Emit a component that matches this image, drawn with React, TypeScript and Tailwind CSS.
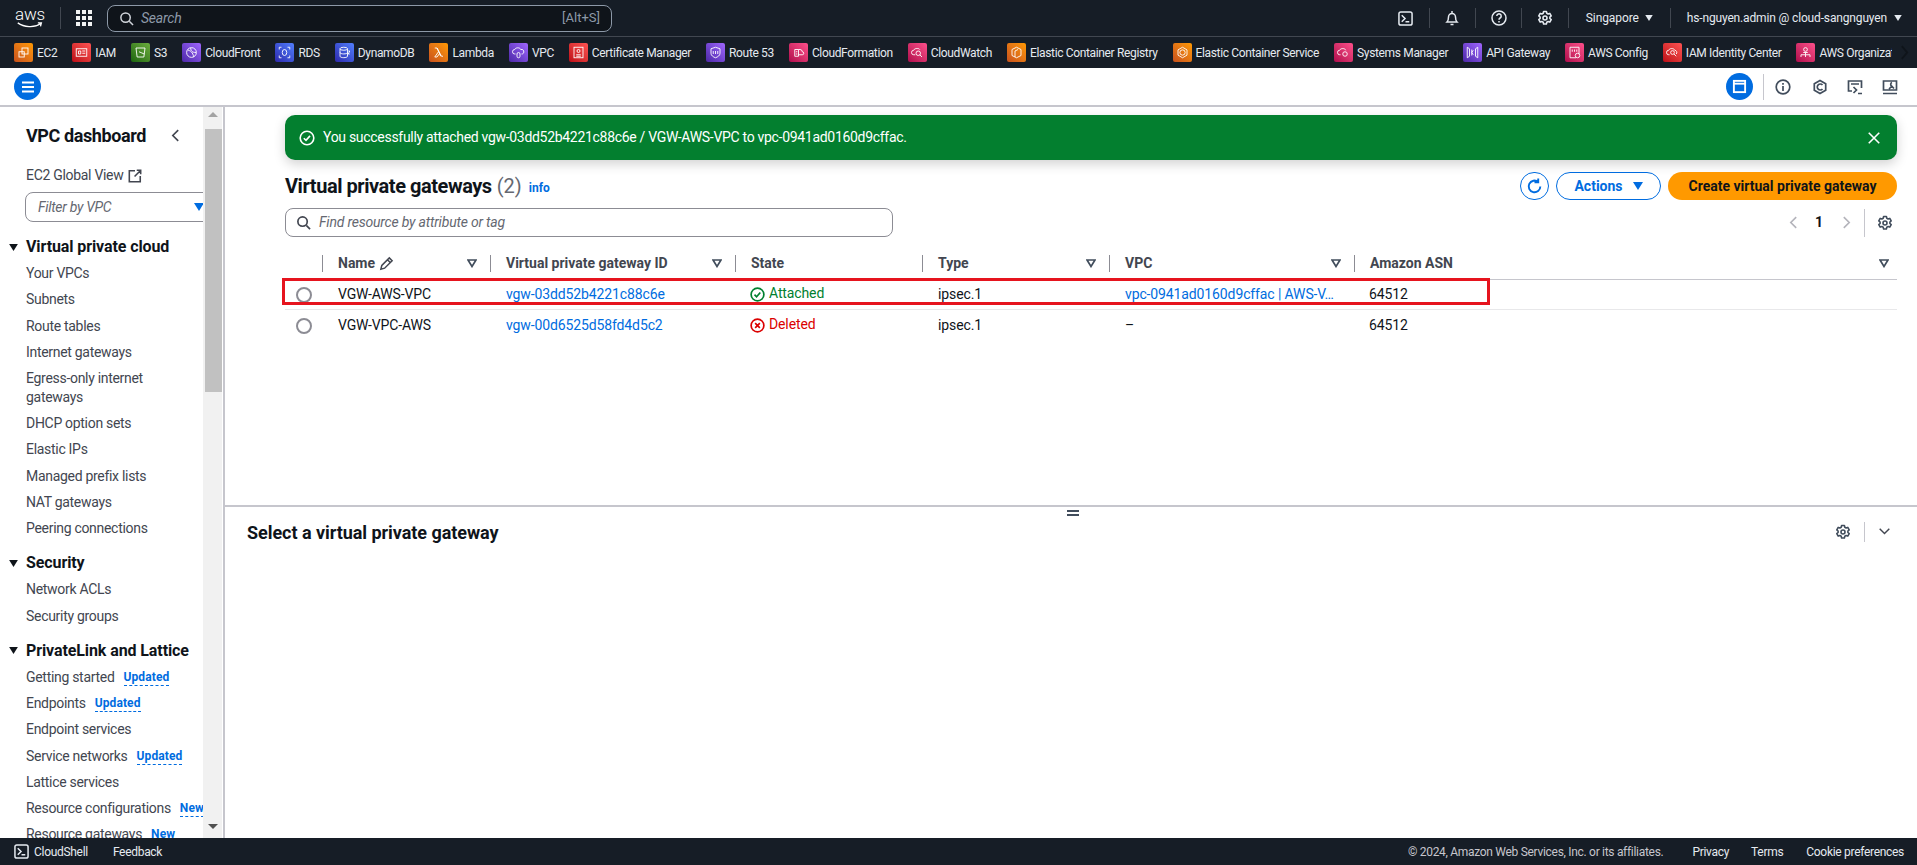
import { ReactNode } from "react";

const FONT = "font-['Roboto','Liberation_Sans',sans-serif]";

const grads: Record<string, string> = {
  orange: "from-[#c8511b] to-[#ff9900]",
  red: "from-[#bd0816] to-[#ff5252]",
  green: "from-[#1b660f] to-[#6cae3e]",
  purple: "from-[#4d27a8] to-[#a166ff]",
  blue: "from-[#2e27ad] to-[#527fff]",
  pink: "from-[#b0084d] to-[#ff4f8b]",
};

const services: { name: string; color: string; icon: ReactNode }[] = [
  { name: "EC2", color: "orange", icon: <><rect x="8" y="4" width="8" height="8" /><rect x="4" y="9" width="7" height="7" /></> },
  { name: "IAM", color: "red", icon: <><rect x="3" y="5" width="14" height="10" /><path d="M6 8h3v4H6zM11 8h4M11 11h4" /></> },
  { name: "S3", color: "green", icon: <><path d="M4 4h12l-1.5 12h-9zM8 9l7 3" /></> },
  { name: "CloudFront", color: "purple", icon: <><circle cx="10" cy="10" r="6.5" /><path d="M5 7c3 0 7 3 8 9M9 4c0 4 2 6 7 6" /></> },
  { name: "RDS", color: "blue", icon: <><ellipse cx="10" cy="10" rx="3" ry="4" /><path d="M3 6V3h3M14 3h3v3M3 14v3h3M14 17h3v-3" /></> },
  { name: "DynamoDB", color: "blue", icon: <><ellipse cx="9" cy="5" rx="5" ry="2" /><path d="M4 5v10c0 2.500 10 2.500 10 0V5M4 10c0 2.500 10 2.500 10 0M15 8l2 0-2 4h2" /></> },
  { name: "Lambda", color: "orange", icon: <path d="M5 4h3l6 11h2M8 4l5 11M10 9l-5 7h3l3-4" /> },
  { name: "VPC", color: "purple", icon: <><path d="M6 12H5a3 3 0 0 1 0-6c1-3 7-3 8 0a3 3 0 0 1 2 6h-1" /><rect x="8" y="10" width="4" height="7" rx="2" /></> },
  { name: "Certificate Manager", color: "red", icon: <><rect x="4" y="3" width="12" height="14" /><circle cx="10" cy="8" r="2" /><path d="M7 13h6M7 15h6" /></> },
  { name: "Route 53", color: "purple", icon: <><path d="M10 3l6 2v6c0 3-3 5-6 6-3-1-6-3-6-6V5z" /><path d="M7 8v4M10 8v4M13 8v4" /></> },
  { name: "CloudFormation", color: "pink", icon: <><path d="M5 15V6h5v9zM10 6h2a3 3 0 0 1 3 3 2 2 0 0 1 0 4h-5" /><path d="M6.500 9h2M6.500 12h2" /></> },
  { name: "CloudWatch", color: "pink", icon: <><path d="M7 13H5a3 3 0 0 1 0-6c1-3 7-3 8-1" /><circle cx="11" cy="11" r="3" /><path d="M13 13l3 3" /></> },
  { name: "Elastic Container Registry", color: "orange", icon: <><path d="M10 3l6 3v8l-6 3-6-3V6zM8 8v8M12 6l-4 2" /></> },
  { name: "Elastic Container Service", color: "orange", icon: <><path d="M10 3l6 3.500v7L10 17l-6-3.500v-7z" /><circle cx="10" cy="10" r="3.500" /></> },
  { name: "Systems Manager", color: "pink", icon: <><path d="M6 13H5a3 3 0 0 1 0-6c1-3 7-3 8 0" /><circle cx="12" cy="12" r="3" /></> },
  { name: "API Gateway", color: "purple", icon: <path d="M3 3l3 2v10l-3 2zM17 3l-3 2v10l3 2zM9 6v8M11 7l-2 3 2 3" /> },
  { name: "AWS Config", color: "pink", icon: <><path d="M4 3h12v9M4 3v14h8M7 6v3M10 6v3M13 6v3" /><circle cx="14" cy="14" r="3" /></> },
  { name: "IAM Identity Center", color: "red", icon: <><path d="M6 13H5a3 3 0 0 1 0-6c1-3 7-3 8 0a3 3 0 0 1 2 5" /><circle cx="10" cy="10" r="2.500" /><path d="M12 12l3 3" /></> },
  { name: "AWS Organizations", color: "pink", icon: <><circle cx="10" cy="6" r="2.500" /><path d="M7 10h6M10 10v3M4 16v-3h12v3M10 13v3" /></> },
];

function ServiceItem({ name, color, icon }: { name: string; color: string; icon: ReactNode }) {
  return (
    <div className="flex items-center shrink-0 gap-[4px]">
      <span className={`w-[19px] h-[19px] rounded-[2px] bg-linear-to-tr ${grads[color]} flex items-center justify-center`}>
        <svg viewBox="0 0 20 20" className="w-[15px] h-[15px]" fill="none" stroke="#fff" strokeWidth="1.2">{icon}</svg>
      </span>
      <span className="text-[12px] tracking-[-0.35px] text-[#e5eaf0] whitespace-nowrap">{name}</span>
    </div>
  );
}

function Divider({ className = "" }: { className?: string }) {
  return <span className={`w-px h-[20px] bg-[#414750] ${className}`} />;
}

function Gear({ className = "", color = "#414d5c" }: { className?: string; color?: string }) {
  return (
    <svg viewBox="0 0 16 16" className={className} fill="none" stroke={color} strokeWidth="1.6" strokeLinejoin="round">
      <path d="M6.600 1.500h2.800l.4 1.800 1.300.7 1.700-.6 1.400 2.400-1.300 1.200v1.500l1.300 1.200-1.400 2.400-1.700-.6-1.300.7-.4 1.800H6.600l-.4-1.800-1.300-.7-1.700.6-1.400-2.400 1.300-1.200V6.999L1.800 5.800l1.400-2.400 1.700.6 1.300-.7z" />
      <circle cx="8" cy="8" r="2" />
    </svg>
  );
}

function Terminal({ className = "" }: { className?: string }) {
  return (
    <svg viewBox="0 0 16 16" className={className} fill="none" stroke="#e5eaf0" strokeWidth="1.6">
      <rect x="1" y="1" width="14" height="14" rx="2" />
      <path d="M4 4.500L7.500 8 4 11.500M8 11.500h4" />
    </svg>
  );
}

function Caret({ className = "" }: { className?: string }) {
  return (
    <svg viewBox="0 0 10 8" className={className} fill="currentColor">
      <path d="M0 0h10L5 8z" />
    </svg>
  );
}

function SortIcon() {
  return (
    <svg viewBox="0 0 10 9" className="w-[10px] h-[9px] shrink-0" fill="none" stroke="#414d5c" strokeWidth="1.7">
      <path d="M1 1h8L5 7.500z" />
    </svg>
  );
}

function TopBar() {
  return (
    <div className="h-[36px] flex items-center bg-[#161d26] shrink-0">
      <div className="ml-[15px] w-[30px] flex flex-col items-center text-white leading-none">
        <span className="text-[17px] leading-[12px] tracking-[-0.2px] font-light">aws</span>
        <svg viewBox="0 0 30 8" className="w-[30px] h-[7px] mt-[2px]" fill="none" stroke="#fff" strokeWidth="1.5">
          <path d="M1 1c7 5 19 6 26 1M24 1l4 0-1 4" />
        </svg>
      </div>
      <Divider className="ml-[15px] h-[22px]" />
      <svg viewBox="0 0 16 16" className="w-[16px] h-[16px] ml-[15px]" fill="#f2f3f3">
        <path d="M0 0h4v4H0zM6 0h4v4H6zM12 0h4v4h-4zM0 6h4v4H0zM6 6h4v4H6zM12 6h4v4h-4zM0 12h4v4H0zM6 12h4v4H6zM12 12h4v4h-4z" />
      </svg>
      <div className="ml-[15px] w-[505px] h-[27px] flex items-center rounded-[8px] border border-[#8d99a8] bg-[#0f141a] px-[11px]">
        <svg viewBox="0 0 16 16" className="w-[15px] h-[15px]" fill="none" stroke="#d1d5db" strokeWidth="1.6">
          <circle cx="7" cy="7" r="5" />
          <path d="M11 11l4 4" />
        </svg>
        <span className="ml-[7px] text-[14px] italic tracking-[-0.2px] text-[#8d99a8]">Search</span>
        <span className="ml-auto text-[13px] text-[#8d99a8]">[Alt+S]</span>
      </div>
      <div className="ml-auto flex items-center text-[#e5eaf0]">
        <Terminal className="w-[15px] h-[15px]" />
        <Divider className="ml-[16px]" />
        <svg viewBox="0 0 16 16" className="w-[16px] h-[16px] ml-[14px]" fill="none" stroke="#e5eaf0" strokeWidth="1.5">
          <path d="M3 12c1.500-1.500 1.500-3 1.500-5a3.500 3.500 0 0 1 7 0c0 2 0 3.500 1.500 5zM6.500 14.500h3M8 1v2" />
        </svg>
        <Divider className="ml-[15px]" />
        <svg viewBox="0 0 16 16" className="w-[16px] h-[16px] ml-[15px]" fill="none" stroke="#e5eaf0" strokeWidth="1.5">
          <circle cx="8" cy="8" r="7" />
          <path d="M5.800 6a2.200 2.200 0 1 1 3.300 2c-.8.500-1.100.8-1.100 1.800M8 11v1.500" />
        </svg>
        <Divider className="ml-[14px]" />
        <Gear className="w-[16px] h-[16px] ml-[15px]" color="#e5eaf0" />
        <Divider className="ml-[15px]" />
        <span className="ml-[17px] text-[12px] tracking-[-0.1px]">Singapore</span>
        <Caret className="w-[8px] h-[6px] ml-[6px]" />
        <Divider className="ml-[17px]" />
        <span className="ml-[16px] text-[12px] tracking-[-0.15px]">hs-nguyen.admin @ cloud-sangnguyen</span>
        <Caret className="w-[8px] h-[6px] ml-[7px] mr-[15px]" />
      </div>
    </div>
  );
}

function ServicesBar() {
  return (
    <div className="h-[32px] flex items-center bg-[#161d26] border-t border-[#414750] shrink-0">
      <div className="flex items-center gap-[15px] pl-[14px] w-[1892px] overflow-hidden">
        {services.map((s) => (
          <ServiceItem key={s.name} {...s} />
        ))}
      </div>
      <svg viewBox="0 0 10 16" className="w-[9px] h-[15px] ml-[8px]" fill="none" stroke="#0f141a" strokeWidth="2">
        <path d="M2 1l6 7-6 7" />
      </svg>
    </div>
  );
}

function ToolIcon({ children }: { children: ReactNode }) {
  return (
    <svg viewBox="0 0 16 16" className="w-[16px] h-[16px]" fill="none" stroke="#414d5c" strokeWidth="1.7">
      {children}
    </svg>
  );
}

function HeaderBar() {
  return (
    <div className="h-[39px] flex items-center border-b-2 border-[#c6c6cd] bg-white shrink-0">
      <span className="ml-[14px] w-[27px] h-[27px] rounded-full bg-[#006ce0] flex items-center justify-center">
        <svg viewBox="0 0 16 16" className="w-[16px] h-[16px]" stroke="#fff" strokeWidth="1.800">
          <path d="M2 3.500h12M2 8h12M2 12.500h12" />
        </svg>
      </span>
      <div className="ml-auto mr-[19px] flex items-center">
        <span className="w-[27px] h-[27px] rounded-full bg-[#006ce0] flex items-center justify-center">
          <svg viewBox="0 0 16 16" className="w-[15px] h-[15px]" fill="none" stroke="#fff" strokeWidth="2">
            <rect x="2" y="2" width="12" height="12" />
            <path d="M2 5h12" />
          </svg>
        </span>
        <span className="w-px h-[26px] bg-[#c6c6cd] ml-[10px]" />
        <span className="ml-[11px]">
          <ToolIcon><circle cx="8" cy="8" r="6.800" /><path d="M8 7v5M8 4v1.800" /></ToolIcon>
        </span>
        <span className="ml-[21px]">
          <ToolIcon><path d="M8 1.500l5.700 3.200v6.600L8 14.500l-5.700-3.200V4.700z" /><path d="M10.500 6A3 3 0 1 0 10.500 10" /></ToolIcon>
        </span>
        <span className="ml-[19px]">
          <ToolIcon><path d="M5 12H1.500V2h13v7M4 5h8" /><path d="M6.500 8l3 3-3 3M11 14.500h4" /></ToolIcon>
        </span>
        <span className="ml-[19px]">
          <ToolIcon><path d="M1.500 11V2h13v9zM1 14.500h14M7 10l3-3M10 3.500a2 2 0 0 0-.5 3.500l2.500 2.500" /></ToolIcon>
        </span>
      </div>
    </div>
  );
}

function NavLink({ label, badge }: { label: string; badge?: string }) {
  return (
    <div className="pl-[26px] text-[14px] leading-[19px] tracking-[-0.3px] text-[#424650] whitespace-nowrap flex items-center">
      <span>{label}</span>
      {badge && (
        <span className="ml-[9px] text-[12px] leading-[16px] tracking-[0.1px] font-bold text-[#006ce0] border-b border-dashed border-[#006ce0]">{badge}</span>
      )}
    </div>
  );
}

function NavSection({ title, items }: { title: string; items: { label: string; badge?: string }[] }) {
  return (
    <div className="mb-[15px]">
      <div className="flex items-center h-[20px] mb-[7px]">
        <Caret className="w-[9px] h-[7px] ml-[9px] text-[#0f141a]" />
        <span className="ml-[8px] text-[16px] font-bold tracking-[-0.1px] text-[#0f141a] whitespace-nowrap">{title}</span>
      </div>
      <div className="flex flex-col gap-[7.300px]">
        {items.map((i) => (
          <NavLink key={i.label} {...i} />
        ))}
      </div>
    </div>
  );
}

function Sidebar() {
  return (
    <div className="w-[225px] shrink-0 flex border-r-2 border-[#c6c6cd] overflow-hidden">
      <div className="w-[203px] overflow-hidden shrink-0">
        <div className="flex items-center pl-[26px] pt-[17px] h-[40px]">
          <span className="text-[18px] font-bold tracking-[-0.4px] text-[#0f141a] whitespace-nowrap">VPC dashboard</span>
          <svg viewBox="0 0 10 14" className="w-[9px] h-[13px] ml-[25px]" fill="none" stroke="#424650" strokeWidth="1.800">
            <path d="M8 1L2 7l6 6" />
          </svg>
        </div>
        <div className="pl-[26px] mt-[19px] flex items-center text-[14px] leading-[19px] tracking-[-0.3px] text-[#424650]">
          EC2 Global View
          <svg viewBox="0 0 16 16" className="w-[14px] h-[14px] ml-[5px]" fill="none" stroke="#424650" strokeWidth="1.800">
            <path d="M8 2H1.500v12.500H14V8M10 1.500h4.500V6M14 2L7.500 8.500" />
          </svg>
        </div>
        <div className="ml-[25px] mt-[7px] w-[200px] h-[30px] flex items-center rounded-[8px] border border-[#8c8c94] pl-[12px]">
          <span className="text-[14px] italic tracking-[-0.3px] text-[#656871]">Filter by VPC</span>
          <Caret className="w-[10px] h-[8px] ml-[83px] text-[#006ce0]" />
        </div>
        <div className="mt-[15px]">
          <NavSection
            title="Virtual private cloud"
            items={[
              { label: "Your VPCs" },
              { label: "Subnets" },
              { label: "Route tables" },
              { label: "Internet gateways" },
            ]}
          />
        </div>
        <div className="-mt-[8px] flex flex-col gap-[7.300px] mb-[15px]">
          <div className="pl-[26px] text-[14px] leading-[19px] tracking-[-0.3px] text-[#424650]">
            Egress-only internet
            <br />
            gateways
          </div>
          <NavLink label="DHCP option sets" />
          <NavLink label="Elastic IPs" />
          <NavLink label="Managed prefix lists" />
          <NavLink label="NAT gateways" />
          <NavLink label="Peering connections" />
        </div>
        <NavSection title="Security" items={[{ label: "Network ACLs" }, { label: "Security groups" }]} />
        <NavSection
          title="PrivateLink and Lattice"
          items={[
            { label: "Getting started", badge: "Updated" },
            { label: "Endpoints", badge: "Updated" },
            { label: "Endpoint services" },
            { label: "Service networks", badge: "Updated" },
            { label: "Lattice services" },
            { label: "Resource configurations", badge: "New" },
            { label: "Resource gateways", badge: "New" },
          ]}
        />
      </div>
      <div className="w-[19px] bg-[#f1f1f1] flex flex-col items-center pt-[5px] pb-[9px]">
        <span className="w-0 h-0 border-x-[5px] border-x-transparent border-b-[5px] border-b-[#a3a3a3]" />
        <span className="ml-[1px] mt-[12px] w-[17px] h-[263px] bg-[#c1c1c1]" />
        <span className="mt-auto w-0 h-0 border-x-[5px] border-x-transparent border-t-[5px] border-t-[#505050]" />
      </div>
    </div>
  );
}

function Radio() {
  return <span className="w-[16px] h-[16px] rounded-full border-2 border-[#8c8c94] bg-white" />;
}

const columns = [
  { label: "Name", sort: true },
  { label: "Virtual private gateway ID", sort: true },
  { label: "State", sort: false },
  { label: "Type", sort: true },
  { label: "VPC", sort: true },
  { label: "Amazon ASN", sort: true },
];

const cols = "grid grid-cols-[37px_168px_245px_187px_187px_245px_543px]";

function Row({ name, id, state, vpc, vpcLink, last }: { name: string; id: string; state: "ok" | "err"; vpc: string; vpcLink: boolean; last?: boolean }) {
  return (
    <div className={`${cols} items-center text-[14px] tracking-[-0.12px] text-[#0f141a] ${last ? "h-[31px]" : "h-[30px] border-b border-[#e8e8ea]"}`}>
      <div className="flex justify-end pr-[2px] -ml-[4px]"><div className="mr-[8px] flex"><Radio /></div></div>
      <div className="pl-[16px]">{name}</div>
      <div className="pl-[16px] text-[#006ce0]">{id}</div>
      <div className="pl-[15px] flex items-center gap-[4px]">
        {state === "ok" ? (
          <>
            <svg viewBox="0 0 16 16" className="w-[15px] h-[15px]" fill="none" stroke="#00802f" strokeWidth="1.800">
              <circle cx="8" cy="8" r="6.800" />
              <path d="M4.800 8.200l2.200 2.200 4-4.500" />
            </svg>
            <span className="text-[#00802f] -mt-[2px]">Attached</span>
          </>
        ) : (
          <>
            <svg viewBox="0 0 16 16" className="w-[15px] h-[15px]" fill="none" stroke="#db0000" strokeWidth="1.800">
              <circle cx="8" cy="8" r="6.800" />
              <path d="M5.500 5.500l5 5M10.500 5.500l-5 5" />
            </svg>
            <span className="text-[#db0000] -mt-[2px]">Deleted</span>
          </>
        )}
      </div>
      <div className="pl-[16px]">ipsec.1</div>
      <div className={`pl-[16px] whitespace-nowrap ${vpcLink ? "text-[#006ce0]" : ""}`}>{vpc}</div>
      <div className="pl-[15px]">64512</div>
    </div>
  );
}

function TablePanel() {
  return (
    <div className="h-[400px] border-b-2 border-[#c6c6cd] relative shrink-0">
      <div className="pt-[8px] pl-[60px] pr-[20px]">
        <div className="h-[45px] rounded-[10px] bg-[#037f2f] text-white flex items-center pl-[14px] pr-[16px] shadow-[0_4px_12px_rgba(0,0,0,0.18)]">
          <svg viewBox="0 0 16 16" className="w-[16px] h-[16px]" fill="none" stroke="#fff" strokeWidth="1.600">
            <circle cx="8" cy="8" r="6.800" />
            <path d="M4.800 8.200l2.200 2.200 4-4.500" />
          </svg>
          <span className="ml-[8px] text-[14px] tracking-[-0.3px]">You successfully attached vgw-03dd52b4221c88c6e / VGW-AWS-VPC to vpc-0941ad0160d9cffac.</span>
          <svg viewBox="0 0 16 16" className="ml-auto w-[14px] h-[14px]" stroke="#fff" strokeWidth="1.800">
            <path d="M2 2l12 12M14 2L2 14" />
          </svg>
        </div>
        <div className="flex items-center mt-[12px] h-[28px]">
          <span className="text-[20px] font-bold tracking-[-0.45px] text-[#0f141a]">Virtual private gateways</span>
          <span className="ml-[5px] text-[20px] text-[#656871]">(2)</span>
          <span className="ml-[7px] mt-[3px] text-[12px] font-bold text-[#006ce0]">info</span>
          <span className="ml-auto w-[29px] h-[28px] rounded-full border border-[#006ce0] flex items-center justify-center">
            <svg viewBox="0 0 16 16" className="w-[17px] h-[17px]" fill="none" stroke="#006ce0" strokeWidth="1.800">
              <path d="M13.500 8a5.500 5.500 0 1 1-2-4.300M11.500 0.500v3.500H8" />
            </svg>
          </span>
          <span className="ml-[7px] w-[105px] h-[28px] rounded-full border border-[#006ce0] flex items-center justify-center gap-[10px] text-[14px] font-bold text-[#006ce0]">
            Actions
            <Caret className="w-[10px] h-[8px]" />
          </span>
          <span className="ml-[7px] w-[229px] h-[28px] rounded-full bg-[#ff9900] flex items-center justify-center text-[14px] font-bold text-[#0f141a]">
            Create virtual private gateway
          </span>
        </div>
        <div className="flex items-center mt-[8px] h-[29px]">
          <div className="w-[608px] h-[29px] rounded-[8px] border border-[#8c8c94] flex items-center pl-[10px]">
            <svg viewBox="0 0 16 16" className="w-[15px] h-[15px]" fill="none" stroke="#424650" strokeWidth="1.800">
              <circle cx="7" cy="7" r="5" />
              <path d="M11 11l4 4" />
            </svg>
            <span className="ml-[8px] text-[14px] italic tracking-[-0.2px] text-[#656871]">Find resource by attribute or tag</span>
          </div>
          <div className="ml-auto flex items-center">
            <svg viewBox="0 0 10 14" className="w-[9px] h-[13px]" fill="none" stroke="#b4b4bb" strokeWidth="1.800">
              <path d="M8 1L2 7l6 6" />
            </svg>
            <span className="ml-[17px] text-[14px] font-bold text-[#0f141a]">1</span>
            <svg viewBox="0 0 10 14" className="w-[9px] h-[13px] ml-[19px]" fill="none" stroke="#b4b4bb" strokeWidth="1.800">
              <path d="M2 1l6 6-6 6" />
            </svg>
            <span className="ml-[13px] w-px h-[28px] bg-[#c6c6cd]" />
            <Gear className="ml-[12px] w-[16px] h-[16px] mr-[4px]" />
          </div>
        </div>
        <div className={`${cols} mt-[11px] h-[32px] items-center border-b border-[#c6c6cd]`}>
          <div />
          {columns.map((c, i) => (
            <div
              key={c.label}
              className={`h-[17px] flex items-center border-l border-[#8c8c94] pl-[15px] text-[14px] font-bold text-[#424650] ${i === 5 ? "pr-[8px]" : "pr-[13px]"}`}
            >
              <span className="whitespace-nowrap">{c.label}</span>
              {i === 0 && (
                <svg viewBox="0 0 16 16" className="w-[15px] h-[15px] ml-[4px]" fill="none" stroke="#424650" strokeWidth="1.600">
                  <path d="M2 14l1-4 8-8 3 3-8 8zM9 4l3 3" />
                </svg>
              )}
              {c.sort && <span className="ml-auto"><SortIcon /></span>}
            </div>
          ))}
        </div>
        <Row name="VGW-AWS-VPC" id="vgw-03dd52b4221c88c6e" state="ok" vpc="vpc-0941ad0160d9cffac | AWS-V…" vpcLink />
        <Row name="VGW-VPC-AWS" id="vgw-00d6525d58fd4d5c2" state="err" vpc="–" vpcLink={false} last />
      </div>
      {/* red annotation drawn over the first row */}
      <div className="absolute left-[57px] top-[171px] w-[1208px] h-[27px] border-[3px] border-[#e6141e]" />
      <div className="absolute bottom-[-11px] left-[842px] w-[12px] flex flex-col gap-[2px]">
        <span className="h-[2px] bg-[#414d5c]" />
        <span className="h-[2px] bg-[#414d5c]" />
      </div>
    </div>
  );
}

function DetailPanel() {
  return (
    <div className="flex items-center pl-[22px] pr-[20px] pt-[4px] h-[46px]">
      <span className="text-[18px] font-bold tracking-[-0.05px] text-[#0f141a]">Select a virtual private gateway</span>
      <Gear className="ml-auto w-[16px] h-[16px]" />
      <span className="ml-[13px] w-px h-[20px] bg-[#c6c6cd]" />
      <svg viewBox="0 0 14 10" className="ml-[13px] w-[13px] h-[8px] mr-[6px]" fill="none" stroke="#424650" strokeWidth="1.800">
        <path d="M1 1l6 6 6-6" />
      </svg>
    </div>
  );
}

function Footer() {
  return (
    <div className="h-[27px] bg-[#161d26] flex items-center text-[12px] tracking-[-0.3px] text-[#e5eaf0] shrink-0">
      <Terminal className="ml-[14px] w-[15px] h-[15px]" />
      <span className="ml-[5px]">CloudShell</span>
      <span className="ml-[25px]">Feedback</span>
      <span className="ml-auto text-[#c6c6cd]">© 2024, Amazon Web Services, Inc. or its affiliates.</span>
      <span className="ml-[29px]">Privacy</span>
      <span className="ml-[22px]">Terms</span>
      <span className="ml-[23px] mr-[13px]">Cookie preferences</span>
    </div>
  );
}

export default function App() {
  return (
    <div className={`${FONT} w-[1917px] h-[865px] flex flex-col overflow-hidden bg-white`}>
      <TopBar />
      <ServicesBar />
      <HeaderBar />
      <div className="flex-1 flex min-h-0">
        <Sidebar />
        <div className="flex-1 flex flex-col min-w-0">
          <TablePanel />
          <DetailPanel />
        </div>
      </div>
      <Footer />
    </div>
  );
}
